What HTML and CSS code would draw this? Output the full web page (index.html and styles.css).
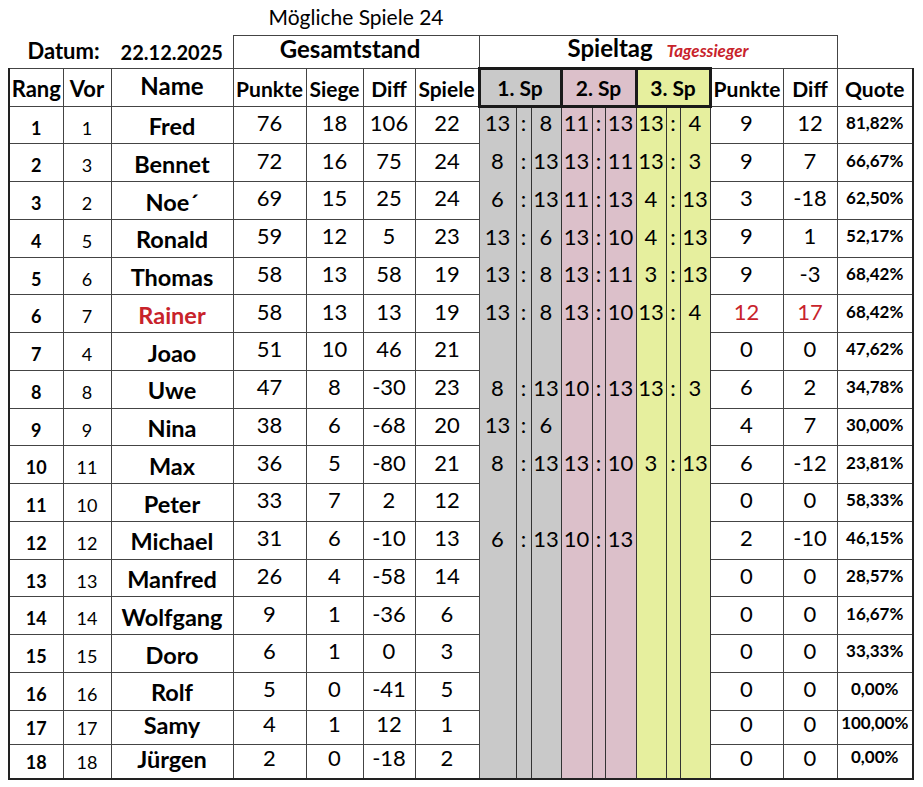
FILE: index.html
```html
<!DOCTYPE html>
<html lang="de">
<head>
<meta charset="utf-8">
<title>Spieltag</title>
<link rel="stylesheet" href="styles.css">
</head>
<body>
<table class="sheet">
  <colgroup>
    <col class="w-rang"><col class="w-vor"><col class="w-name">
    <col class="w-pkt"><col class="w-sieg"><col class="w-diff"><col class="w-spl">
    <col class="w-1a"><col class="w-1c"><col class="w-1b">
    <col class="w-2a"><col class="w-2c"><col class="w-2b">
    <col class="w-3a"><col class="w-3c"><col class="w-3b">
    <col class="w-tp"><col class="w-td"><col class="w-q">
  </colgroup>
  <tbody>
    <tr class="r-title">
      <td colspan="3" class="blank"></td>
      <td colspan="4" class="title">Mögliche Spiele 24</td>
      <td colspan="12" class="blank"></td>
    </tr>
    <tr class="r-a">
      <td colspan="2" class="datum datum-l">Datum:</td>
      <td class="datum datum-r">22.12.2025</td>
      <th colspan="4" class="box box-g">Gesamtstand</th>
      <th colspan="11" class="box">Spieltag <span class="sieger">Tagessieger</span></th>
      <td class="blank"></td>
    </tr>
    <tr class="r-b">
      <th class="h h-rang first">Rang</th>
      <th class="h h-rang">Vor</th>
      <th class="h h-name">Name</th>
      <th class="h">Punkte</th>
      <th class="h">Siege</th>
      <th class="h">Diff</th>
      <th class="h">Spiele</th>
      <th colspan="3" class="sp g1">1. Sp</th>
      <th colspan="3" class="sp g2">2. Sp</th>
      <th colspan="3" class="sp g3">3. Sp</th>
      <th class="h h-r">Punkte</th>
      <th class="h h-r">Diff</th>
      <th class="h h-r last">Quote</th>
    </tr>
    <tr class="row"><td class="rk first">1</td><td class="vr">1</td><td class="nm">Fred</td><td class="n">76</td><td class="n">18</td><td class="n">106</td><td class="n">22</td><td class="s g1">13</td><td class="s g1">:</td><td class="s g1">8</td><td class="s g2">11</td><td class="s g2">:</td><td class="s g2">13</td><td class="s g3">13</td><td class="s g3">:</td><td class="s g3">4</td><td class="n">9</td><td class="n">12</td><td class="q last">81,82%</td></tr>
    <tr class="row"><td class="rk first">2</td><td class="vr">3</td><td class="nm">Bennet</td><td class="n">72</td><td class="n">16</td><td class="n">75</td><td class="n">24</td><td class="s g1">8</td><td class="s g1">:</td><td class="s g1">13</td><td class="s g2">13</td><td class="s g2">:</td><td class="s g2">11</td><td class="s g3">13</td><td class="s g3">:</td><td class="s g3">3</td><td class="n">9</td><td class="n">7</td><td class="q last">66,67%</td></tr>
    <tr class="row"><td class="rk first">3</td><td class="vr">2</td><td class="nm">Noe´</td><td class="n">69</td><td class="n">15</td><td class="n">25</td><td class="n">24</td><td class="s g1">6</td><td class="s g1">:</td><td class="s g1">13</td><td class="s g2">11</td><td class="s g2">:</td><td class="s g2">13</td><td class="s g3">4</td><td class="s g3">:</td><td class="s g3">13</td><td class="n">3</td><td class="n">-18</td><td class="q last">62,50%</td></tr>
    <tr class="row"><td class="rk first">4</td><td class="vr">5</td><td class="nm">Ronald</td><td class="n">59</td><td class="n">12</td><td class="n">5</td><td class="n">23</td><td class="s g1">13</td><td class="s g1">:</td><td class="s g1">6</td><td class="s g2">13</td><td class="s g2">:</td><td class="s g2">10</td><td class="s g3">4</td><td class="s g3">:</td><td class="s g3">13</td><td class="n">9</td><td class="n">1</td><td class="q last">52,17%</td></tr>
    <tr class="row"><td class="rk first">5</td><td class="vr">6</td><td class="nm">Thomas</td><td class="n">58</td><td class="n">13</td><td class="n">58</td><td class="n">19</td><td class="s g1">13</td><td class="s g1">:</td><td class="s g1">8</td><td class="s g2">13</td><td class="s g2">:</td><td class="s g2">11</td><td class="s g3">3</td><td class="s g3">:</td><td class="s g3">13</td><td class="n">9</td><td class="n">-3</td><td class="q last">68,42%</td></tr>
    <tr class="row"><td class="rk first">6</td><td class="vr">7</td><td class="nm red">Rainer</td><td class="n">58</td><td class="n">13</td><td class="n">13</td><td class="n">19</td><td class="s g1">13</td><td class="s g1">:</td><td class="s g1">8</td><td class="s g2">13</td><td class="s g2">:</td><td class="s g2">10</td><td class="s g3">13</td><td class="s g3">:</td><td class="s g3">4</td><td class="n red">12</td><td class="n red">17</td><td class="q last">68,42%</td></tr>
    <tr class="row"><td class="rk first">7</td><td class="vr">4</td><td class="nm">Joao</td><td class="n">51</td><td class="n">10</td><td class="n">46</td><td class="n">21</td><td class="s g1"></td><td class="s g1"></td><td class="s g1"></td><td class="s g2"></td><td class="s g2"></td><td class="s g2"></td><td class="s g3"></td><td class="s g3"></td><td class="s g3"></td><td class="n">0</td><td class="n">0</td><td class="q last">47,62%</td></tr>
    <tr class="row"><td class="rk first">8</td><td class="vr">8</td><td class="nm">Uwe</td><td class="n">47</td><td class="n">8</td><td class="n">-30</td><td class="n">23</td><td class="s g1">8</td><td class="s g1">:</td><td class="s g1">13</td><td class="s g2">10</td><td class="s g2">:</td><td class="s g2">13</td><td class="s g3">13</td><td class="s g3">:</td><td class="s g3">3</td><td class="n">6</td><td class="n">2</td><td class="q last">34,78%</td></tr>
    <tr class="row"><td class="rk first">9</td><td class="vr">9</td><td class="nm">Nina</td><td class="n">38</td><td class="n">6</td><td class="n">-68</td><td class="n">20</td><td class="s g1">13</td><td class="s g1">:</td><td class="s g1">6</td><td class="s g2"></td><td class="s g2"></td><td class="s g2"></td><td class="s g3"></td><td class="s g3"></td><td class="s g3"></td><td class="n">4</td><td class="n">7</td><td class="q last">30,00%</td></tr>
    <tr class="row"><td class="rk first">10</td><td class="vr">11</td><td class="nm">Max</td><td class="n">36</td><td class="n">5</td><td class="n">-80</td><td class="n">21</td><td class="s g1">8</td><td class="s g1">:</td><td class="s g1">13</td><td class="s g2">13</td><td class="s g2">:</td><td class="s g2">10</td><td class="s g3">3</td><td class="s g3">:</td><td class="s g3">13</td><td class="n">6</td><td class="n">-12</td><td class="q last">23,81%</td></tr>
    <tr class="row"><td class="rk first">11</td><td class="vr">10</td><td class="nm">Peter</td><td class="n">33</td><td class="n">7</td><td class="n">2</td><td class="n">12</td><td class="s g1"></td><td class="s g1"></td><td class="s g1"></td><td class="s g2"></td><td class="s g2"></td><td class="s g2"></td><td class="s g3"></td><td class="s g3"></td><td class="s g3"></td><td class="n">0</td><td class="n">0</td><td class="q last">58,33%</td></tr>
    <tr class="row"><td class="rk first">12</td><td class="vr">12</td><td class="nm">Michael</td><td class="n">31</td><td class="n">6</td><td class="n">-10</td><td class="n">13</td><td class="s g1">6</td><td class="s g1">:</td><td class="s g1">13</td><td class="s g2">10</td><td class="s g2">:</td><td class="s g2">13</td><td class="s g3"></td><td class="s g3"></td><td class="s g3"></td><td class="n">2</td><td class="n">-10</td><td class="q last">46,15%</td></tr>
    <tr class="row"><td class="rk first">13</td><td class="vr">13</td><td class="nm">Manfred</td><td class="n">26</td><td class="n">4</td><td class="n">-58</td><td class="n">14</td><td class="s g1"></td><td class="s g1"></td><td class="s g1"></td><td class="s g2"></td><td class="s g2"></td><td class="s g2"></td><td class="s g3"></td><td class="s g3"></td><td class="s g3"></td><td class="n">0</td><td class="n">0</td><td class="q last">28,57%</td></tr>
    <tr class="row"><td class="rk first">14</td><td class="vr">14</td><td class="nm">Wolfgang</td><td class="n">9</td><td class="n">1</td><td class="n">-36</td><td class="n">6</td><td class="s g1"></td><td class="s g1"></td><td class="s g1"></td><td class="s g2"></td><td class="s g2"></td><td class="s g2"></td><td class="s g3"></td><td class="s g3"></td><td class="s g3"></td><td class="n">0</td><td class="n">0</td><td class="q last">16,67%</td></tr>
    <tr class="row"><td class="rk first">15</td><td class="vr">15</td><td class="nm">Doro</td><td class="n">6</td><td class="n">1</td><td class="n">0</td><td class="n">3</td><td class="s g1"></td><td class="s g1"></td><td class="s g1"></td><td class="s g2"></td><td class="s g2"></td><td class="s g2"></td><td class="s g3"></td><td class="s g3"></td><td class="s g3"></td><td class="n">0</td><td class="n">0</td><td class="q last">33,33%</td></tr>
    <tr class="row"><td class="rk first">16</td><td class="vr">16</td><td class="nm">Rolf</td><td class="n">5</td><td class="n">0</td><td class="n">-41</td><td class="n">5</td><td class="s g1"></td><td class="s g1"></td><td class="s g1"></td><td class="s g2"></td><td class="s g2"></td><td class="s g2"></td><td class="s g3"></td><td class="s g3"></td><td class="s g3"></td><td class="n">0</td><td class="n">0</td><td class="q last">0,00%</td></tr>
    <tr class="row short"><td class="rk first">17</td><td class="vr">17</td><td class="nm">Samy</td><td class="n">4</td><td class="n">1</td><td class="n">12</td><td class="n">1</td><td class="s g1"></td><td class="s g1"></td><td class="s g1"></td><td class="s g2"></td><td class="s g2"></td><td class="s g2"></td><td class="s g3"></td><td class="s g3"></td><td class="s g3"></td><td class="n">0</td><td class="n">0</td><td class="q last">100,00%</td></tr>
    <tr class="row short end"><td class="rk first">18</td><td class="vr">18</td><td class="nm">Jürgen</td><td class="n">2</td><td class="n">0</td><td class="n">-18</td><td class="n">2</td><td class="s g1"></td><td class="s g1"></td><td class="s g1"></td><td class="s g2"></td><td class="s g2"></td><td class="s g2"></td><td class="s g3"></td><td class="s g3"></td><td class="s g3"></td><td class="n">0</td><td class="n">0</td><td class="q last">0,00%</td></tr>
  </tbody>
</table>
</body>
</html>
```

FILE: styles.css
```css
html, body {
  margin: 0;
  padding: 0;
  background: #ffffff;
}

body {
  font-family: Lato, "Open Sans", "DejaVu Sans", sans-serif;
  color: #000000;
}

.sheet {
  border-collapse: collapse;
  table-layout: fixed;
  width: 906px;
  margin-left: 8px;
}

.w-rang { width: 54px; }
.w-vor { width: 48px; }
.w-name { width: 122px; }
.w-pkt { width: 73px; }
.w-sieg { width: 57px; }
.w-diff { width: 52px; }
.w-spl { width: 64px; }
.w-1a { width: 37px; }
.w-1c { width: 15px; }
.w-1b { width: 30px; }
.w-2a { width: 31px; }
.w-2c { width: 13px; }
.w-2b { width: 31px; }
.w-3a { width: 30px; }
.w-3c { width: 14px; }
.w-3b { width: 30px; }
.w-tp { width: 73px; }
.w-td { width: 54px; }
.w-q { width: 76px; }

/* base cell style with zero specificity so classes can override */
:where(.sheet td, .sheet th) {
  padding: 0;
  text-align: center;
  vertical-align: bottom;
  line-height: 1.2;
  white-space: nowrap;
  border: 1px solid #444444;
}

/* rows */
.r-title { height: 35px; }
.r-a { height: 33px; }
.r-b { height: 38px; }
.row { height: 37.75px; }
.row.short { height: 34px; }
.row.end { height: 32px; }

.blank { border: none; }

.title {
  border: none;
  font-size: 21px;
  font-weight: 400;
  line-height: 1;
  padding-bottom: 8px;
}

/* Datum / group header row */
.datum {
  border: none;
  font-weight: 700;
  line-height: 1;
  padding-bottom: 6px;
}
.datum-l {
  font-size: 22px;
  padding-left: 7px;
}
.datum-r {
  font-size: 20px;
}
.box {
  font-size: 24px;
  font-weight: 700;
  line-height: 1;
  padding-bottom: 7px;
}
.box-g {
  padding-right: 12px;
}
.sieger {
  font-size: 17px;
  font-style: italic;
  color: #c8232b;
  margin-left: 8px;
}

/* column header row */
.h {
  font-size: 21px;
  font-weight: 700;
  padding-bottom: 4px;
}
.h-rang {
  font-size: 22px;
  padding-bottom: 3px;
}
.h-name {
  font-size: 24px;
  line-height: 1;
  padding-bottom: 8px;
}
.h-r {
  font-size: 21px;
  padding-bottom: 4px;
}
.sp {
  font-size: 21px;
  font-weight: 700;
  line-height: 1;
  vertical-align: middle;
  border: 3px solid #1a1a1a;
}

/* borders of the outer frame */
.first { border-left: 2px solid #222222; }
.last { border-right: 2px solid #222222; }

/* data cells */
.rk {
  font-size: 18px;
  font-weight: 700;
  padding-bottom: 4px;
}
.vr {
  font-size: 18px;
  font-weight: 400;
  padding-bottom: 4px;
}
.nm {
  font-size: 23.5px;
  font-weight: 700;
  padding-bottom: 3px;
}
.n,
.s {
  font-size: 22px;
  font-weight: 400;
  padding-bottom: 7px;
}
.q {
  font-size: 17px;
  font-weight: 700;
  padding-bottom: 10px;
}
.short .nm { padding-bottom: 5px; }
.short .n,
.short .s { padding-bottom: 6px; }

.red { color: #c8232b; }

.s {
  border-top: none;
  border-bottom: none;
  border-left: 1px solid #333333;
  border-right: 1px solid #333333;
}

.end td { border-bottom: 2px solid #222222; }

.g1 { background: #c9c9c9; }
.g2 { background: #dcc0ca; }
.g3 { background: #e6ef9e; }
```
